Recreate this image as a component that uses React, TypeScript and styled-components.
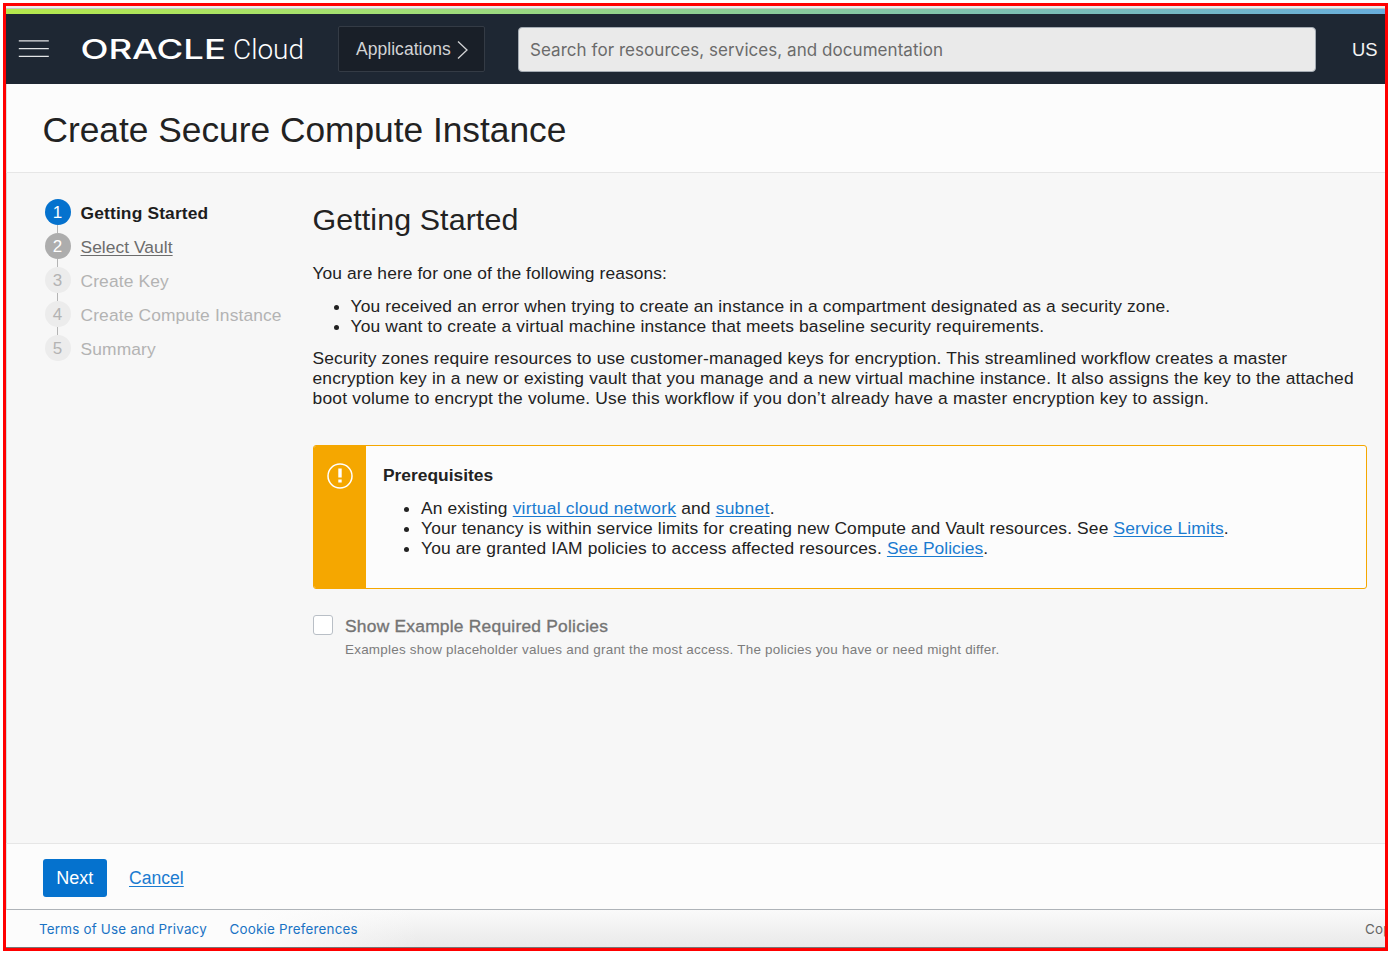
import styled, { createGlobalStyle, css } from "styled-components";

const GlobalStyle = createGlobalStyle`
  *, *::before, *::after { box-sizing: border-box; }
  html, body { margin: 0; padding: 0; background: #ffffff; }
  body { font-family: "Liberation Sans", Arial, sans-serif; color: #222222; overflow: hidden; }
  p, h1, h2, h3, ul, ol { margin: 0; padding: 0; font-weight: 400; }
`;

const Frame = styled.div`
  width: 1385px;
  height: 948px;
  margin: 3px 0 0 3px;
  border: 3px solid #ff0000;
  background: #f7f7f7;
  display: flex;
  flex-direction: column;
  overflow: hidden;
  white-space: nowrap;
`;

const TopEdge = styled.div`
  height: 3px;
  flex: none;
  background: #ededed;
  border-bottom: 1px solid #c3c9c4;
`;

const Ribbon = styled.div`
  height: 5px;
  flex: none;
  background: linear-gradient(90deg, #b5e84c 0%, #a3df74 27%, #8ecf92 50%, #74b8c4 85%, #68aedd 100%);
`;

const Header = styled.header`
  height: 70px;
  flex: none;
  display: flex;
  align-items: center;
  padding-left: 12px;
  background: #1e2733;
`;

const MenuIcon = styled.svg`
  flex: none;
  width: 31px;
  height: 20px;
`;

const Logo = styled.svg`
  flex: none;
  width: 226px;
  height: 34px;
  margin-left: 31px;
`;

const AppsButton = styled.button`
  flex: none;
  width: 147px;
  height: 46px;
  margin-left: 32px;
  padding: 1px 16px 0 17px;
  display: flex;
  align-items: center;
  justify-content: space-between;
  border: 1px solid #343b45;
  border-radius: 2px;
  background: #191f28;
  color: #d2d3d5;
  font: 17.5px "Liberation Sans", Arial, sans-serif;
  letter-spacing: 0.04px;
`;

const Search = styled.div`
  flex: none;
  width: 798px;
  height: 45px;
  margin-left: 33px;
  padding: 2px 0 0 11px;
  display: flex;
  align-items: center;
  border: 1px solid #a4abb3;
  border-radius: 4px;
  background: #eaeaea;
  color: #6b6b6b;
  font: 17px Inter, sans-serif;
  letter-spacing: 0.05px;
`;

const Region = styled.span`
  margin-left: 36px;
  padding-top: 2px;
  color: #f4f4f4;
  font-size: 18.4px;
`;

const TitleBar = styled.div`
  height: 89px;
  flex: none;
  padding: 4px 0 0 35.5px;
  display: flex;
  align-items: center;
  border-left: 1px solid #dcdcdc;
  border-bottom: 1px solid #e6e6e6;
  background: #fcfcfc;
`;

const Title = styled.h1`
  font-size: 35.3px;
  line-height: 42px;
`;

const Body = styled.main`
  flex: 1;
  display: flex;
  border-left: 1px solid #d4d4d4;
`;

const Steps = styled.ol`
  width: 305.5px;
  flex: none;
  padding: 26px 0 0 37.5px;
  list-style: none;
`;

type StepState = "current" | "next" | "later";

const Step = styled.li`
  height: 34px;
  display: flex;
  align-items: flex-start;
  gap: 10px;
`;

const Marker = styled.div`
  width: 26px;
  display: flex;
  flex-direction: column;
  align-items: center;
`;

const Bullet = styled.span<{ $state: StepState }>`
  width: 26px;
  height: 26px;
  border-radius: 50%;
  text-align: center;
  font-size: 17px;
  line-height: 27px;
  ${({ $state }) =>
    $state === "current"
      ? css`background: #0572ce; color: #fff;`
      : $state === "next"
      ? css`background: #adadad; color: #fff;`
      : css`background: #ececec; color: #b3b3b3;`}
`;

const Connector = styled.span`
  width: 1px;
  height: 8px;
  background: #b4b4b4;
`;

const StepLabel = styled.span<{ $state: StepState }>`
  font-size: 17.4px;
  line-height: 28px;
  ${({ $state }) =>
    $state === "current"
      ? css`color: #1d1d1d; font-weight: 700; letter-spacing: 0.15px;`
      : $state === "next"
      ? css`color: #6c6c6c; letter-spacing: 0.05px; text-decoration: underline; text-underline-offset: 2px;`
      : css`color: #b3b3b3; letter-spacing: 0.13px;`}
`;

const Content = styled.section`
  width: 1054.5px;
  flex: none;
  padding-top: 27px;
  font-size: 17.4px;
  line-height: 20px;
`;

const Heading = styled.h2`
  font-size: 30.4px;
  line-height: 38px;
  letter-spacing: 0.1px;
`;

const Para = styled.p<{ $top: number }>`
  margin-top: ${({ $top }) => $top}px;
`;

const Tracked = styled.span<{ $ls: number }>`
  letter-spacing: ${({ $ls }) => $ls}px;
`;

const List = styled.ul<{ $top: number }>`
  margin-top: ${({ $top }) => $top}px;
  padding-left: 38px;
  letter-spacing: 0.147px;
`;

const Link = styled.a<{ $ls?: number }>`
  color: #1a7bd0;
  letter-spacing: ${({ $ls = 0.05 }) => $ls}px;
  text-decoration: underline;
  text-underline-offset: 2px;
`;

const Notice = styled.div`
  height: 144px;
  margin-top: 37px;
  display: flex;
  border: 1px solid #f5a700;
  border-radius: 3px;
  background: #fcfcfc;
  overflow: hidden;
`;

const NoticeRail = styled.div`
  width: 52.5px;
  flex: none;
  padding-top: 17px;
  display: flex;
  justify-content: center;
  align-items: flex-start;
  background: #f5a700;
`;

const NoticeBody = styled.div`
  padding: 19px 0 0 17px;
`;

const NoticeTitle = styled.h3`
  font-size: 17.4px;
  font-weight: 700;
`;

const CheckRow = styled.label`
  margin-top: 25.5px;
  display: flex;
  gap: 12px;
`;

const Check = styled.span`
  width: 20.5px;
  height: 20.5px;
  border: 1px solid #b9bfc6;
  border-radius: 3px;
  background: #fff;
`;

const CheckText = styled.span`
  display: flex;
  flex-direction: column;
  color: #747474;
  padding-top: 1.5px;
`;

const CheckLabel = styled.span`
  font-size: 17.4px;
  line-height: 20px;
  letter-spacing: 0.23px;
  -webkit-text-stroke: 0.35px #747474;
`;

const CheckHint = styled.span`
  margin-top: 4.5px;
  font-size: 13.45px;
  line-height: 18px;
  letter-spacing: 0.23px;
  color: #7c7c7c;
`;

const ActionBar = styled.div`
  height: 67px;
  flex: none;
  padding: 2px 0 0 35.5px;
  display: flex;
  align-items: center;
  gap: 22px;
  border-left: 1px solid #dcdcdc;
  border-top: 1px solid #e6e6e6;
  border-bottom: 1px solid #aeb3b8;
  background: #fcfcfc;
`;

const NextButton = styled.button`
  width: 64.5px;
  height: 38px;
  padding: 1px 0 0;
  border: 0;
  border-radius: 3px;
  background: #0572ce;
  color: #fff;
  font: 18px "Liberation Sans", Arial, sans-serif;
`;

const Cancel = styled(Link)`
  padding-top: 1px;
  font-size: 17.6px;
`;

const Footer = styled.footer`
  height: 38px;
  flex: none;
  padding: 0 0 0 33px;
  display: flex;
  align-items: center;
  border-bottom: 1px solid #777;
  background: linear-gradient(90deg, #fcfcfc 18%, rgba(252, 252, 252, 0) 30%), linear-gradient(180deg, #fafafa, #e9e9e9);
  font: 13.4px Inter, sans-serif;
  letter-spacing: 0.21px;
`;

const FooterLink = styled.a`
  margin-right: 22.5px;
  color: #1a73c4;
`;

const Copyright = styled.span`
  margin-left: auto;
  width: 20px;
  overflow: hidden;
  color: #666;
`;

const steps: { label: string; state: StepState }[] = [
  { label: "Getting Started", state: "current" },
  { label: "Select Vault", state: "next" },
  { label: "Create Key", state: "later" },
  { label: "Create Compute Instance", state: "later" },
  { label: "Summary", state: "later" },
];

export default function App() {
  return (
    <>
      <GlobalStyle />
      <Frame>
        <TopEdge />
        <Ribbon />
        <Header>
          <MenuIcon viewBox="0 0 31 20" stroke="#e3e5e7" strokeWidth="1.2">
            <path d="M0.8 1.9H30.8M0.8 9.6H30.8M0.8 17.4H30.8" />
          </MenuIcon>
          <Logo viewBox="0 0 226 34" fill="#ffffff">
            <text x="0.5" y="27" fontFamily="Inter, sans-serif" fontWeight="500" fontSize="26.4" textLength="145.5" lengthAdjust="spacingAndGlyphs">ORACLE</text>
            <text x="153" y="27" fontFamily="Roboto, sans-serif" fontWeight="300" fontSize="28" textLength="71" lengthAdjust="spacingAndGlyphs">Cloud</text>
          </Logo>
          <AppsButton>
            Applications
            <svg width="11" height="20" viewBox="0 0 11 20" fill="none" stroke="#d2d3d5" strokeWidth="1.3">
              <path d="M1 1.5L10 10L1 18.5" />
            </svg>
          </AppsButton>
          <Search>Search for resources, services, and documentation</Search>
          <Region>US</Region>
        </Header>
        <TitleBar>
          <Title>Create Secure Compute Instance</Title>
        </TitleBar>
        <Body>
          <Steps>
            {steps.map((s, i) => (
              <Step key={s.label}>
                <Marker>
                  <Bullet $state={s.state}>{i + 1}</Bullet>
                  {i < steps.length - 1 && <Connector />}
                </Marker>
                <StepLabel $state={s.state}>{s.label}</StepLabel>
              </Step>
            ))}
          </Steps>
          <Content>
            <Heading>Getting Started</Heading>
            <Para $top={25}>
              <Tracked $ls={0.09}>You are here for one of the following reasons:</Tracked>
            </Para>
            <List $top={13}>
              <li>You received an error when trying to create an instance in a compartment designated as a security zone.</li>
              <li>You want to create a virtual machine instance that meets baseline security requirements.</li>
            </List>
            <Para $top={12}>
              <Tracked $ls={0.16}>Security zones require resources to use customer-managed keys for encryption. This streamlined workflow creates a master</Tracked>
              <br />
              <Tracked $ls={0.168}>encryption key in a new or existing vault that you manage and a new virtual machine instance. It also assigns the key to the attached</Tracked>
              <br />
              <Tracked $ls={0.21}>boot volume to encrypt the volume. Use this workflow if you don’t already have a master encryption key to assign.</Tracked>
            </Para>
            <Notice>
              <NoticeRail>
                <svg width="26" height="26" viewBox="0 0 26 26" fill="none" stroke="#fff">
                  <circle cx="13" cy="13" r="12" strokeWidth="1.5" />
                  <path d="M13 5.5V14.5M13 16.5V19.5" strokeWidth="3.4" />
                </svg>
              </NoticeRail>
              <NoticeBody>
                <NoticeTitle>Prerequisites</NoticeTitle>
                <List $top={13}>
                  <li>An existing <Link $ls={0.24}>virtual cloud network</Link> and <Link $ls={0.3}>subnet</Link>.</li>
                  <li>Your tenancy is within service limits for creating new Compute and Vault resources. See <Link $ls={0.15}>Service Limits</Link>.</li>
                  <li>You are granted IAM policies to access affected resources. <Link>See Policies</Link>.</li>
                </List>
              </NoticeBody>
            </Notice>
            <CheckRow>
              <Check />
              <CheckText>
                <CheckLabel>Show Example Required Policies</CheckLabel>
                <CheckHint>Examples show placeholder values and grant the most access. The policies you have or need might differ.</CheckHint>
              </CheckText>
            </CheckRow>
          </Content>
        </Body>
        <ActionBar>
          <NextButton>Next</NextButton>
          <Cancel $ls={0}>Cancel</Cancel>
        </ActionBar>
        <Footer>
          <FooterLink>Terms of Use and Privacy</FooterLink>
          <FooterLink>Cookie Preferences</FooterLink>
          <Copyright>Copyright</Copyright>
        </Footer>
      </Frame>
    </>
  );
}
